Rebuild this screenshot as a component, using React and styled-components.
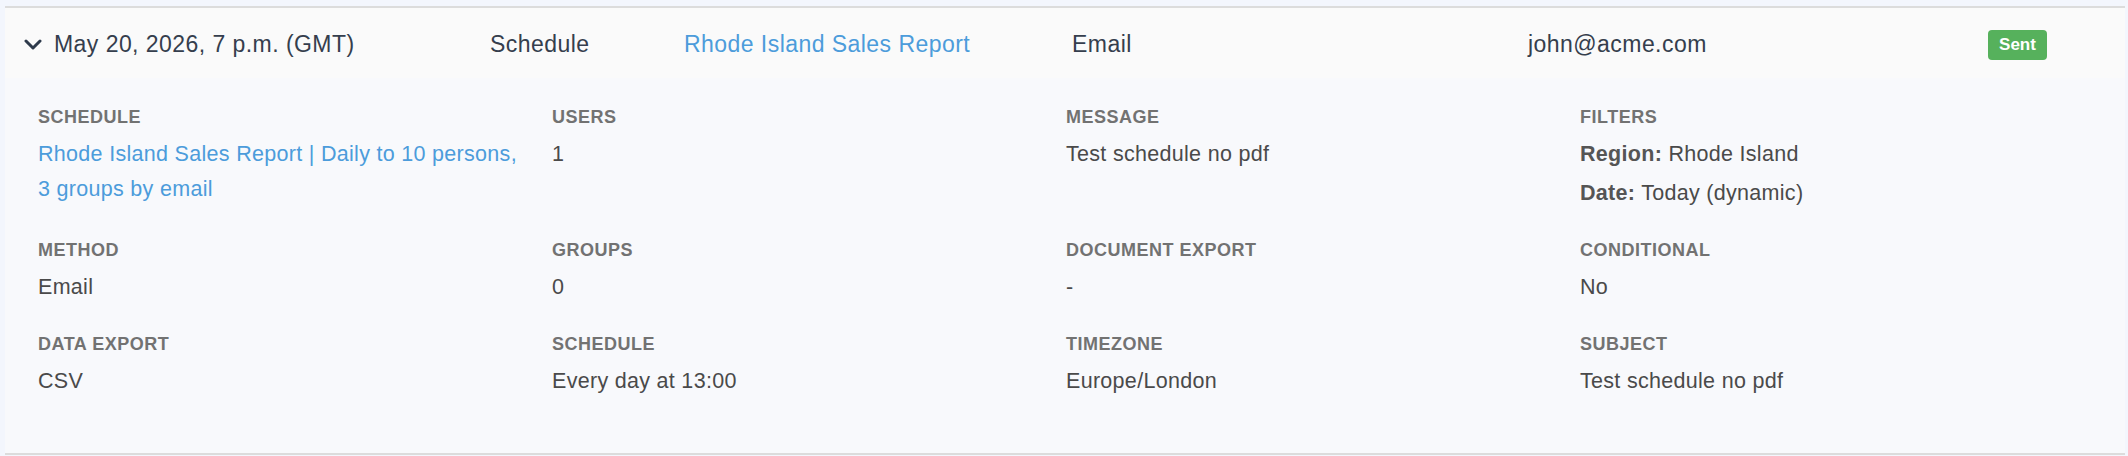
import React from 'react';
import styled, { createGlobalStyle } from 'styled-components';

const GlobalStyle = createGlobalStyle`
  body {
    margin: 0;
    background: #f3f6fd;
    font-family: "Liberation Sans", Arial, sans-serif;
  }
`;

const Page = styled.div`
  padding: 6px 3px 0 5px;
`;

const Panel = styled.div`
  border-top: 2px solid #dcdcdc;
  border-bottom: 2px solid #dcdcdc;
`;

const Header = styled.div`
  height: 70px;
  padding-top: 2px;
  box-sizing: border-box;
  background: #fafafa;
  display: grid;
  grid-template-columns: 35px 436px 194px 388px 456px 460px 1fr;
  align-items: center;
  padding-left: 14px;
  font-size: 23px;
  color: #353e4d;
`;

const Chevron = styled.svg`
  width: 18px;
  height: 11px;
  display: block;
  margin-left: 5px;
`;

const Cell = styled.div`
  white-space: nowrap;
  letter-spacing: 0.45px;
`;

const Link = styled.a`
  color: #4c9cdb;
  text-decoration: none;
  cursor: pointer;
`;

const Badge = styled.span`
  display: inline-flex;
  align-items: center;
  justify-content: center;
  width: 59px;
  height: 30px;
  border-radius: 4px;
  background: #56b15c;
  color: #fff;
  font-weight: 700;
  font-size: 17px;
  letter-spacing: 0;
`;

const Details = styled.div`
  background: #f8f9fc;
  padding: 29px 33px 54px 33px;
  display: grid;
  grid-template-columns: repeat(4, 514px);
  row-gap: 29px;
`;

const Field = styled.div``;

const Label = styled.div`
  font-size: 18px;
  line-height: 20px;
  font-weight: 700;
  color: #727272;
  text-transform: uppercase;
  letter-spacing: 0.5px;
  margin-bottom: 10px;
`;

const Value = styled.div`
  font-size: 21.5px;
  line-height: 35px;
  color: #4a4a4a;
  letter-spacing: 0.3px;
  padding-right: 30px;
`;

const FilterLine = styled.div`
  & + & {
    margin-top: 4px;
  }
`;

const Key = styled.b`
  font-weight: 700;
  color: #555;
`;

const fields = [
  {
    label: 'Schedule',
    value: (
      <Link>Rhode Island Sales Report | Daily to 10 persons, 3 groups by email</Link>
    ),
  },
  { label: 'Users', value: '1' },
  { label: 'Message', value: 'Test schedule no pdf' },
  {
    label: 'Filters',
    value: (
      <>
        <FilterLine>
          <Key>Region:</Key> Rhode Island
        </FilterLine>
        <FilterLine>
          <Key>Date:</Key> Today (dynamic)
        </FilterLine>
      </>
    ),
  },
  { label: 'Method', value: 'Email' },
  { label: 'Groups', value: '0' },
  { label: 'Document export', value: '-' },
  { label: 'Conditional', value: 'No' },
  { label: 'Data export', value: 'CSV' },
  { label: 'Schedule', value: 'Every day at 13:00' },
  { label: 'Timezone', value: 'Europe/London' },
  { label: 'Subject', value: 'Test schedule no pdf' },
];

export default function App() {
  return (
    <>
      <GlobalStyle />
      <Page>
        <Panel>
          <Header>
            <Chevron viewBox="0 0 18 11" fill="none">
              <path
                d="M2 2l7 7 7-7"
                stroke="#2e3a4b"
                strokeWidth="3"
                strokeLinecap="round"
                strokeLinejoin="round"
              />
            </Chevron>
            <Cell>May 20, 2026, 7 p.m. (GMT)</Cell>
            <Cell>Schedule</Cell>
            <Cell>
              <Link>Rhode Island Sales Report</Link>
            </Cell>
            <Cell>Email</Cell>
            <Cell>john@acme.com</Cell>
            <div>
              <Badge>Sent</Badge>
            </div>
          </Header>
          <Details>
            {fields.map((f, i) => (
              <Field key={i}>
                <Label>{f.label}</Label>
                <Value>{f.value}</Value>
              </Field>
            ))}
          </Details>
        </Panel>
      </Page>
    </>
  );
}
